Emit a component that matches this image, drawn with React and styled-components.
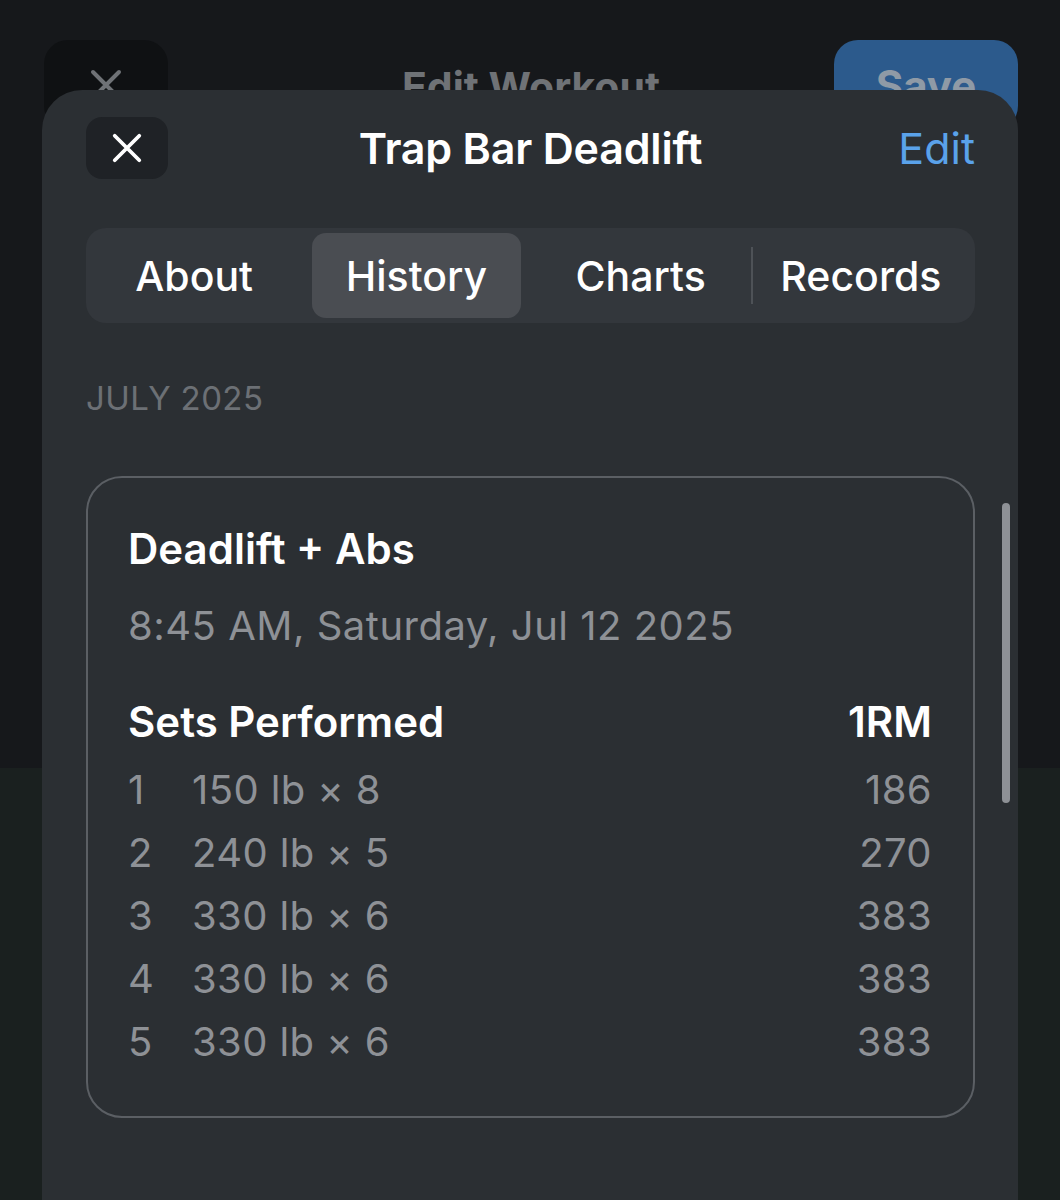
import React from "react"
import styled, { createGlobalStyle } from "styled-components"

const GlobalStyle = createGlobalStyle`
  html, body {
    margin: 0;
    padding: 0;
    background: #16181b;
  }
  body {
    font-family: Inter, "Noto Sans", "Liberation Sans", sans-serif;
    -webkit-font-smoothing: antialiased;
  }
`

const sets = [
  { n: 1, label: "150 lb × 8", rm: 186 },
  { n: 2, label: "240 lb × 5", rm: 270 },
  { n: 3, label: "330 lb × 6", rm: 383 },
  { n: 4, label: "330 lb × 6", rm: 383 },
  { n: 5, label: "330 lb × 6", rm: 383 },
]

const tabs = ["About", "History", "Charts", "Records"]

const CloseIcon = ({ size = 36, color = "#fff", width = 4 }) => (
  <svg width={size} height={size} viewBox="0 0 36 36" fill="none">
    <path
      d="M5 5L31 31M31 5L5 31"
      stroke={color}
      strokeWidth={width}
      strokeLinecap="round"
    />
  </svg>
)

const App = () => {
  return (
    <>
      <GlobalStyle />
      <Page>
        <BackHeader>
          <BackClose>
            <CloseIcon color="#6f7276" />
          </BackClose>
          <BackTitle>Edit Workout</BackTitle>
          <SaveButton>Save</SaveButton>
        </BackHeader>
        <BackBody />

        <Sheet>
          <SheetHeader>
            <CloseButton>
              <CloseIcon size={34} />
            </CloseButton>
            <Title>Trap Bar Deadlift</Title>
            <EditLink>Edit</EditLink>
          </SheetHeader>

          <Segmented>
            {tabs.map((t, i) => (
              <Segment key={t} $active={t === "History"} $divider={i === 2}>
                <span>{t}</span>
              </Segment>
            ))}
          </Segmented>

          <MonthLabel>JULY 2025</MonthLabel>

          <Card>
            <WorkoutName>Deadlift + Abs</WorkoutName>
            <WorkoutDate>8:45 AM, Saturday, Jul 12 2025</WorkoutDate>
            <SetsHeader>
              <span>Sets Performed</span>
              <span>1RM</span>
            </SetsHeader>
            <SetList>
              {sets.map((s) => (
                <SetRow key={s.n}>
                  <SetNum>{s.n}</SetNum>
                  <SetLabel>{s.label}</SetLabel>
                  <SetRm>{s.rm}</SetRm>
                </SetRow>
              ))}
            </SetList>
          </Card>

          <ScrollThumb />
        </Sheet>
      </Page>
    </>
  )
}

const Page = styled.div`
  position: relative;
  width: 1060px;
  height: 1200px;
  overflow: hidden;
  background: #16181b;
  display: flex;
  flex-direction: column;
`

const BackHeader = styled.div`
  display: grid;
  grid-template-columns: 1fr auto 1fr;
  align-items: start;
  padding: 40px 42px 0 44px;
  height: 768px;
  box-sizing: border-box;
`

const BackClose = styled.div`
  width: 124px;
  height: 90px;
  border-radius: 24px;
  background: #0f1113;
  display: flex;
  align-items: center;
  justify-content: center;
`

const BackTitle = styled.div`
  font-size: 41px;
  font-weight: 700;
  color: #6f7276;
  margin-top: 22px;
`

const SaveButton = styled.div`
  justify-self: end;
  width: 184px;
  height: 90px;
  border-radius: 24px;
  background: #2c5a8c;
  color: #8f9aa6;
  font-size: 42px;
  font-weight: 700;
  display: flex;
  align-items: center;
  justify-content: center;
`

const BackBody = styled.div`
  flex: 1;
  background: #1a201f;
`

const Sheet = styled.div`
  position: absolute;
  top: 90px;
  left: 42px;
  right: 42px;
  bottom: 0;
  background: #2b2f33;
  border-radius: 40px 40px 0 0;
  padding: 27px 43px 0 44px;
  box-sizing: border-box;
  display: flex;
  flex-direction: column;
`

const SheetHeader = styled.div`
  display: grid;
  grid-template-columns: 1fr auto 1fr;
  align-items: center;
  height: 62px;
`

const CloseButton = styled.div`
  width: 82px;
  height: 62px;
  border-radius: 16px;
  background: #1f2226;
  display: flex;
  align-items: center;
  justify-content: center;
`

const Title = styled.div`
  font-size: 43px;
  font-weight: 600;
  color: #ffffff;
  letter-spacing: -0.2px;
`

const EditLink = styled.div`
  justify-self: end;
  font-size: 43px;
  font-weight: 400;
  color: #5aa2ea;
`

const Segmented = styled.div`
  margin-top: 49px;
  height: 95px;
  border-radius: 20px;
  background: #33373c;
  display: grid;
  grid-template-columns: repeat(4, 1fr);
  padding: 5px 0;
  box-sizing: border-box;
`

const Segment = styled.div`
  position: relative;
  display: flex;
  align-items: center;
  justify-content: center;
  margin: 0 7px;
  border-radius: 14px;
  background: ${(p) => (p.$active ? "#4a4d52" : "transparent")};
  color: #ffffff;
  font-size: 41px;
  font-weight: 500;
  transform: translateX(${(p) => (p.$divider ? "-1px" : "-3px")});

  ${(p) =>
    p.$divider &&
    `
    &::after {
      content: "";
      position: absolute;
      right: -8px;
      top: 14px;
      bottom: 14px;
      width: 2px;
      background: #4e5257;
    }
  `}
`

const MonthLabel = styled.div`
  margin-top: 55px;
  height: 40px;
  line-height: 40px;
  font-size: 33px;
  font-weight: 400;
  color: #6c7075;
  letter-spacing: 0.4px;
`

const Card = styled.div`
  margin-top: 58px;
  border: 2px solid #5b5f64;
  border-radius: 36px;
  padding: 46px 41px 43px 40px;
  display: flex;
  flex-direction: column;
`

const WorkoutName = styled.div`
  height: 50px;
  line-height: 50px;
  font-size: 42px;
  font-weight: 600;
  color: #ffffff;
`

const WorkoutDate = styled.div`
  margin-top: 28px;
  height: 48px;
  line-height: 48px;
  font-size: 40px;
  color: #8e9196;
  letter-spacing: 0.5px;
`

const SetsHeader = styled.div`
  margin-top: 47px;
  height: 50px;
  line-height: 50px;
  display: flex;
  justify-content: space-between;
  font-size: 42px;
  font-weight: 600;
  color: #ffffff;
`

const SetList = styled.div`
  margin-top: 11px;
  display: flex;
  flex-direction: column;
`

const SetRow = styled.div`
  display: grid;
  grid-template-columns: 64px 1fr auto;
  height: 63px;
  line-height: 63px;
  font-size: 40px;
  color: #8e9196;
  letter-spacing: 0.4px;
`

const SetNum = styled.span``

const SetLabel = styled.span``

const SetRm = styled.span`
  text-align: right;
`

const ScrollThumb = styled.div`
  position: absolute;
  right: 8px;
  top: 413px;
  width: 8px;
  height: 300px;
  border-radius: 4px;
  background: #8e9196;
`

export default App
